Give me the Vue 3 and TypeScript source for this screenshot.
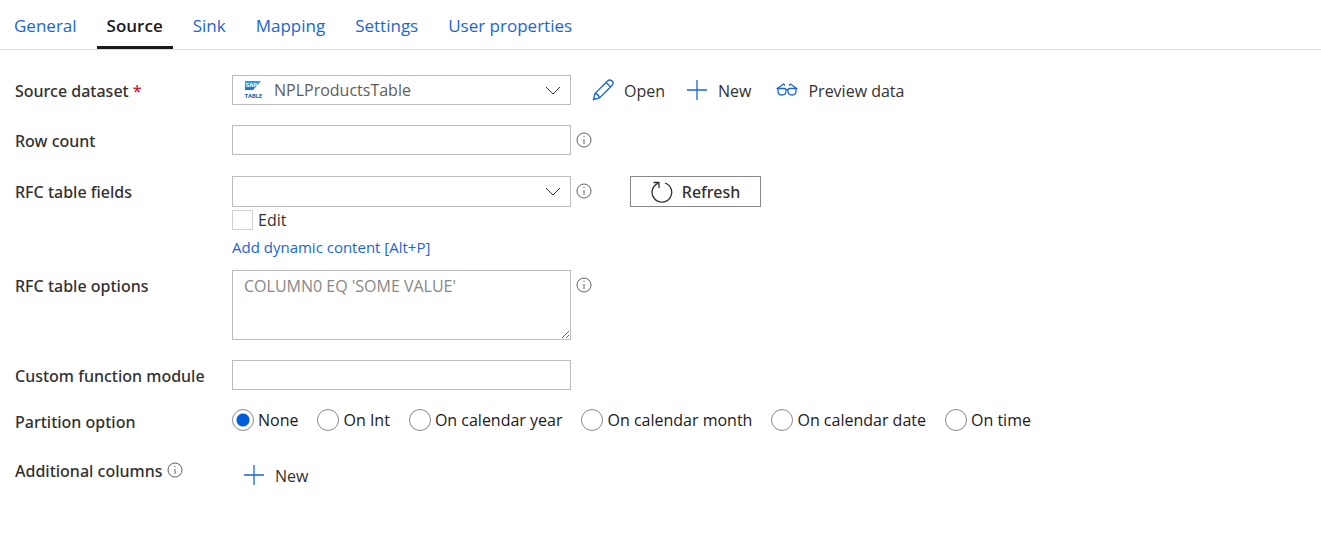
<script setup lang="ts">
import { ref } from 'vue'

const tabs = ['General', 'Source', 'Sink', 'Mapping', 'Settings', 'User properties']
const activeTab = ref('Source')

const partitionOptions = ['None', 'On Int', 'On calendar year', 'On calendar month', 'On calendar date', 'On time']
const partition = ref('None')

const dataset = ref('NPLProductsTable')
const rowCount = ref('')
const tableFields = ref('')
const editFields = ref(false)
const tableOptions = ref('')
const functionModule = ref('')
</script>

<template>
  <main class="panel">
    <nav class="tabs" role="tablist" aria-label="Activity settings">
      <button
        v-for="tab in tabs"
        :key="tab"
        type="button"
        role="tab"
        class="tab"
        :class="{ active: tab === activeTab }"
        :aria-selected="tab === activeTab"
        @click="activeTab = tab"
      >{{ tab }}</button>
    </nav>

    <form class="form" @submit.prevent>
      <div class="row">
        <label class="label" for="dataset">Source dataset <span class="required">*</span></label>
        <div class="controls">
          <div class="field picker">
            <svg class="sap" viewBox="0 0 18 18" aria-hidden="true">
              <defs>
                <linearGradient id="sap-fill" x1="0" y1="0" x2="0" y2="1">
                  <stop offset="0" stop-color="#22a7e8" />
                  <stop offset="1" stop-color="#1a72c4" />
                </linearGradient>
              </defs>
              <path d="M1 0h16L9 9H1z" fill="url(#sap-fill)" />
              <text x="1.500" y="6" class="sap-name">SAP</text>
              <text x="0.500" y="17" class="sap-kind">TABLE</text>
            </svg>
            <select id="dataset" v-model="dataset" class="box with-icon">
              <option>NPLProductsTable</option>
            </select>
            <svg class="chevron" viewBox="0 0 16 9" aria-hidden="true"><path d="M1 1l7 7 7-7" /></svg>
          </div>
          <div class="actions">
            <button type="button" class="action">
              <svg class="icon" viewBox="0 0 22 22" aria-hidden="true">
                <path d="M1.500 20.500L3 14.500L15.500 2a2.700 2.700 0 0 1 4.500 4.500L7.500 19zM3 14.500q3.500.5 4.500 4.500M14 3.500l4.500 4.500" />
              </svg>
              <span>Open</span>
            </button>
            <button type="button" class="action">
              <svg class="icon" viewBox="0 0 22 22" aria-hidden="true"><path d="M11 1v20M1 11h20" /></svg>
              <span>New</span>
            </button>
            <button type="button" class="action preview">
              <svg class="icon" viewBox="0 0 22 22" aria-hidden="true">
                <path d="M0.500 9.500h8q1.500 0 1.500 1.500v1q0 4-4 4T2 12V9.500M21.500 9.500h-8q-1.500 0-1.500 1.500v1q0 4 4 4t4-4V9.500M10 11q1-.8 2 0M2 9l5.500-4 1.500 1.500M20 9l-5.500-4L13 6.500" />
              </svg>
              <span>Preview data</span>
            </button>
          </div>
        </div>
      </div>

      <div class="row">
        <label class="label" for="row-count">Row count</label>
        <div class="controls">
          <div class="field"><input id="row-count" v-model="rowCount" class="box" type="text" /></div>
          <svg class="info" viewBox="0 0 16 16" aria-hidden="true"><circle cx="8" cy="8" r="7" /><path d="M8 7v5M8 4v1" /></svg>
        </div>
      </div>

      <div class="row fields-row">
        <label class="label" for="table-fields">RFC table fields</label>
        <div class="stack">
          <div class="controls">
            <div class="field picker">
              <select id="table-fields" v-model="tableFields" class="box"><option value=""></option></select>
              <svg class="chevron" viewBox="0 0 16 9" aria-hidden="true"><path d="M1 1l7 7 7-7" /></svg>
            </div>
            <svg class="info" viewBox="0 0 16 16" aria-hidden="true"><circle cx="8" cy="8" r="7" /><path d="M8 7v5M8 4v1" /></svg>
            <button type="button" class="refresh">
              <svg class="icon" viewBox="0 0 22 22" aria-hidden="true"><path d="M14 2A9.800 9.800 0 1 1 7 2.300M2.500 1.500h5.500V7" /></svg>
              Refresh
            </button>
          </div>
          <label class="check"><input v-model="editFields" type="checkbox" />Edit</label>
          <a class="dynamic" href="#">Add dynamic content [Alt+P]</a>
        </div>
      </div>

      <div class="row">
        <label class="label" for="table-options">RFC table options</label>
        <div class="controls">
          <div class="field">
            <textarea id="table-options" v-model="tableOptions" class="box area" placeholder="COLUMN0 EQ 'SOME VALUE'"></textarea>
          </div>
          <svg class="info" viewBox="0 0 16 16" aria-hidden="true"><circle cx="8" cy="8" r="7" /><path d="M8 7v5M8 4v1" /></svg>
        </div>
      </div>

      <div class="row">
        <label class="label" for="function-module">Custom function module</label>
        <div class="controls">
          <div class="field"><input id="function-module" v-model="functionModule" class="box" type="text" /></div>
        </div>
      </div>

      <div class="row radio-row" role="radiogroup" aria-labelledby="partition-label">
        <span id="partition-label" class="label">Partition option</span>
        <div class="radios">
          <label v-for="option in partitionOptions" :key="option" class="radio">
            <input v-model="partition" type="radio" name="partition" :value="option" />{{ option }}
          </label>
        </div>
      </div>

      <div class="row">
        <span class="label with-info">
          Additional columns
          <svg class="info" viewBox="0 0 16 16" aria-hidden="true"><circle cx="8" cy="8" r="7" /><path d="M8 7v5M8 4v1" /></svg>
        </span>
        <button type="button" class="action add">
          <svg class="icon" viewBox="0 0 22 22" aria-hidden="true"><path d="M11 1v20M1 11h20" /></svg>
          <span>New</span>
        </button>
      </div>
    </form>
  </main>
</template>

<style>
body {
  background: #fff;
}
</style>

<style scoped>
.panel,
.panel button,
.panel input,
.panel select,
.panel textarea {
  box-sizing: border-box;
  font-family: "Segoe UI", "Open Sans", "Noto Sans", sans-serif;
  font-size: 16px;
  line-height: 22px;
  color: #323130;
}

.panel button {
  margin: 0;
  background: transparent;
  cursor: pointer;
}

.tabs {
  display: flex;
  gap: 10px;
  height: 50px;
  box-sizing: border-box;
  padding: 0 4px;
  border-bottom: 1px solid #dcdcdc;
}

.panel .tab {
  padding: 5px 10px 0;
  border: 0;
  border-bottom: 3px solid transparent;
  font-size: 17px;
  color: #1a66d2;
  white-space: nowrap;
}

.panel .tab.active {
  border-bottom-color: #1b1a19;
  color: #1b1a19;
  font-weight: 600;
}

.form {
  display: flex;
  flex-direction: column;
  gap: 20px;
  padding: 25px 15px;
}

.row {
  display: grid;
  grid-template-columns: 217px minmax(0, 1fr);
  align-items: start;
}

.fields-row {
  margin: 1px 0 -8px;
}

.radio-row {
  margin: -1px 0 2px;
}

.label,
.panel .refresh {
  font-family: "Segoe UI", "Noto Sans", sans-serif;
  font-weight: 500;
}

.label {
  padding-top: 5px;
  white-space: nowrap;
}

.radio-row .label {
  padding-top: 2px;
}

.required {
  color: #c4262e;
}

.controls {
  display: flex;
  align-items: flex-start;
}

.field {
  flex: 0 1 339px;
  min-width: 0;
  display: grid;
}

.picker {
  align-items: center;
}

.picker > * {
  grid-area: 1 / 1;
}

.panel .box {
  width: 100%;
  height: 30px;
  margin: 0;
  padding: 0 11px;
  border: 1px solid #bebbb8;
  border-radius: 0;
  background: transparent;
  color: #605e5c;
  appearance: none;
}

.fields-row .box {
  height: 31px;
}

.panel .with-icon {
  padding-left: 41px;
}

.panel .area {
  display: block;
  height: 70px;
  padding-top: 4px;
  resize: vertical;
}

.area::placeholder {
  color: #8a8886;
  opacity: 1;
}

.sap {
  width: 18px;
  height: 18px;
  margin-left: 12px;
  font-family: Roboto, sans-serif;
  font-weight: 700;
}

.sap-name {
  font-size: 6px;
  fill: #fff;
}

.sap-kind {
  font-size: 6px;
  fill: #1769b5;
}

.chevron {
  width: 16px;
  height: 9px;
  margin-right: 10px;
  justify-self: end;
  pointer-events: none;
  fill: none;
  stroke: #323130;
}

.info {
  flex: none;
  width: 16px;
  height: 16px;
  margin: 7px 0 0 5px;
  fill: none;
  stroke: #605e5c;
}

.icon {
  flex: none;
  width: 22px;
  height: 22px;
  fill: none;
  stroke: #1a66d2;
  stroke-width: 1.3;
}

.actions {
  display: flex;
  gap: 21px;
  margin-left: 21px;
}

.panel .action {
  display: flex;
  align-items: center;
  gap: 10px;
  height: 30px;
  padding: 0;
  border: 0;
  white-space: nowrap;
}

.action span {
  padding-top: 2px;
}

.panel .preview {
  margin-left: 4px;
}

.panel .refresh {
  display: flex;
  align-items: center;
  justify-content: center;
  gap: 9px;
  width: 131px;
  height: 31px;
  margin-left: 38px;
  padding: 0;
  border: 1px solid #8a8886;
}

.refresh .icon {
  stroke: #323130;
}

.stack {
  display: flex;
  flex-direction: column;
  align-items: flex-start;
}

.stack .controls {
  width: 100%;
}

.check {
  display: flex;
  align-items: center;
  gap: 5px;
  margin-top: 2px;
}

.check input {
  appearance: none;
  width: 21px;
  height: 20px;
  margin: 0;
  border: 1px solid #d2d0ce;
}

.dynamic {
  margin-top: 5px;
  font-size: 15px;
  color: #1a66d2;
  text-decoration: none;
}

.radios {
  display: flex;
  flex-wrap: wrap;
  gap: 19px;
}

.radio {
  display: flex;
  align-items: center;
  gap: 4px;
  color: #1b1a19;
  white-space: nowrap;
}

.radio input {
  appearance: none;
  width: 22px;
  height: 22px;
  margin: 0;
  border: 1px solid #8a8886;
  border-radius: 50%;
}

.radio input:checked {
  background: radial-gradient(circle, #015cda 6px, transparent 7px);
}

.with-info {
  display: flex;
}

.with-info .info {
  margin-top: 2px;
}

.panel .add {
  justify-self: start;
  margin: 5px 0 0 11px;
}
</style>
